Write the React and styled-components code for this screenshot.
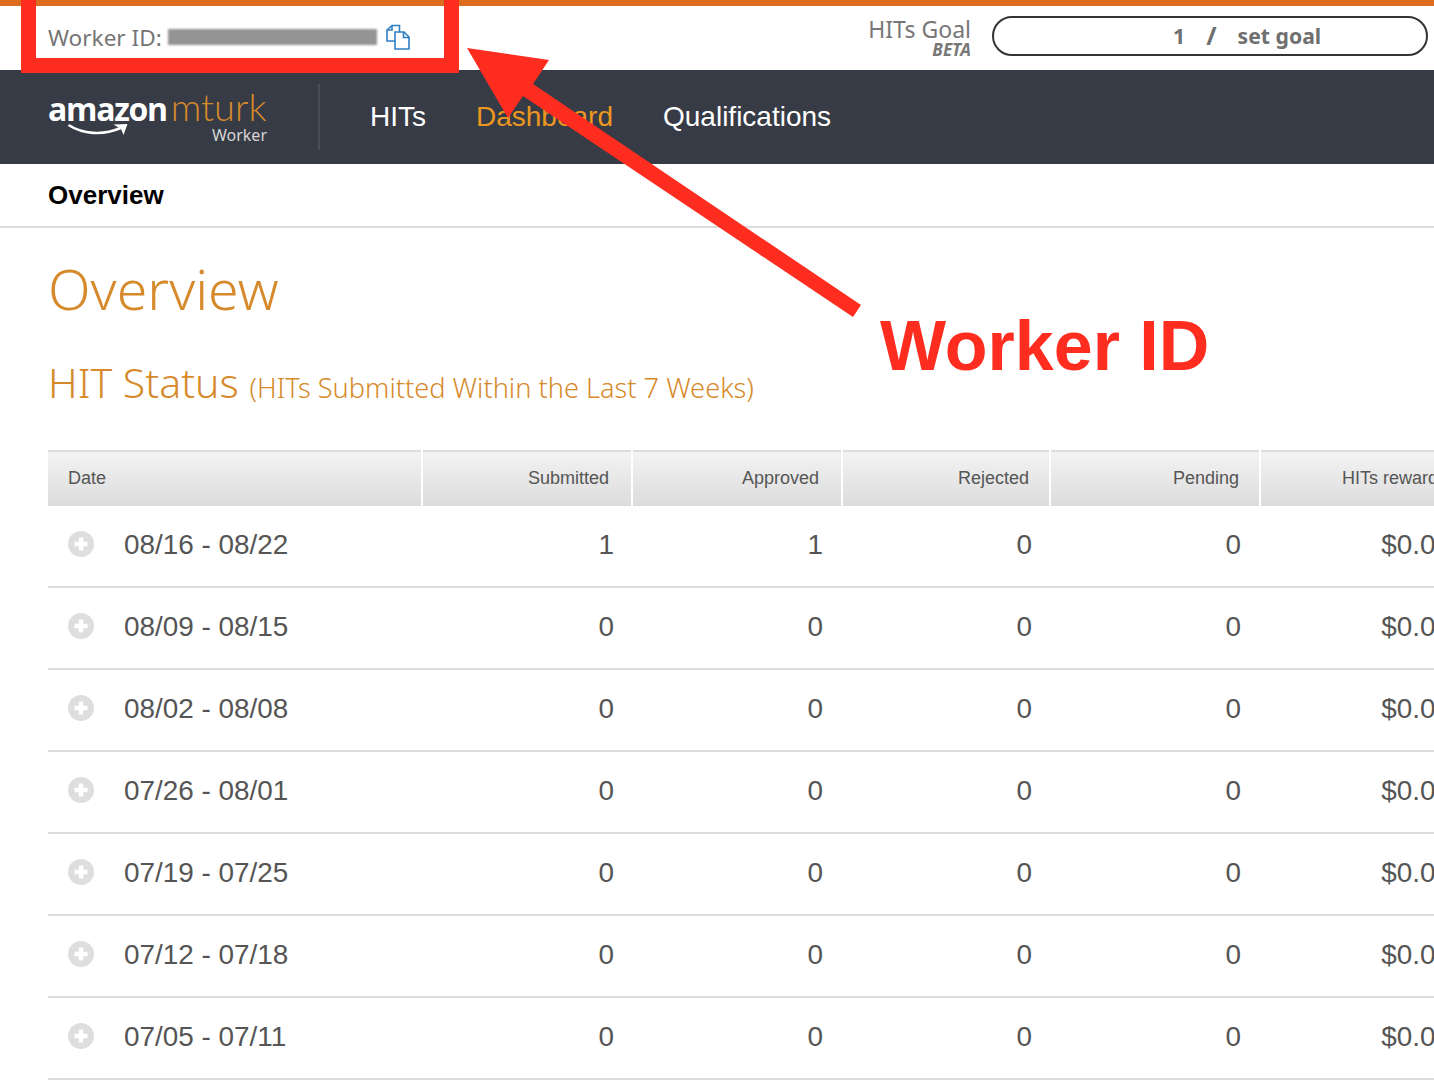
import styled, { createGlobalStyle } from "styled-components";

const rows = [
  { date: "08/16 - 08/22", submitted: 1, approved: 1 },
  { date: "08/09 - 08/15", submitted: 0, approved: 0 },
  { date: "08/02 - 08/08", submitted: 0, approved: 0 },
  { date: "07/26 - 08/01", submitted: 0, approved: 0 },
  { date: "07/19 - 07/25", submitted: 0, approved: 0 },
  { date: "07/12 - 07/18", submitted: 0, approved: 0 },
  { date: "07/05 - 07/11", submitted: 0, approved: 0 },
];

const columns = ["Submitted", "Approved", "Rejected", "Pending", "HITs rewards"];

export default function App() {
  return (
    <Page>
      <GlobalStyle />
      <TopBar>
        <WorkerId>
          Worker ID:
          <Redacted />
          <CopyIcon viewBox="0 0 26 26" fill="none" stroke="#2f7fc4" strokeWidth="1.6">
            <path d="M15 17H2V6l5-4.5h7.5V8" />
            <path d="M7 1.500V6H2" />
            <path d="M10 8h9l5 5v12H10z" fill="#fff" />
            <path d="M18.500 8v5.500H24" />
          </CopyIcon>
        </WorkerId>
        <Goal>
          <GoalLabel>
            HITs Goal
            <small>BETA</small>
          </GoalLabel>
          <GoalPill>
            <span>1</span>
            <em>/</em>
            <span>set goal</span>
          </GoalPill>
        </Goal>
      </TopBar>

      <Nav>
        <Logo>
          <LogoWords>
            <b>amazon</b>
            <i>mturk</i>
          </LogoWords>
          <Smile viewBox="0 0 66 16" fill="none">
            <path d="M2 2c14 9 34 11 52 3" stroke="#fff" strokeWidth="2.600" />
            <path d="M47 1.500l14-.5-4 11-2.500-6z" fill="#fff" />
          </Smile>
          <LogoSub>Worker</LogoSub>
        </Logo>
        <NavLinks>
          <NavLink>HITs</NavLink>
          <NavLink $active>Dashboard</NavLink>
          <NavLink>Qualifications</NavLink>
        </NavLinks>
      </Nav>

      <Breadcrumb>Overview</Breadcrumb>

      <Content>
        <Title>Overview</Title>
        <Subtitle>
          HIT Status <small>(HITs Submitted Within the Last 7 Weeks)</small>
        </Subtitle>
        <Table>
          <HeadRow>
            <HeadCell $left>Date</HeadCell>
            {columns.map((c) => (
              <HeadCell key={c}>{c}</HeadCell>
            ))}
          </HeadRow>
          {rows.map((r) => (
            <Row key={r.date}>
              <DateCell>
                <PlusIcon viewBox="0 0 26 26">
                  <circle cx="13" cy="13" r="13" fill="#dedede" />
                  <path d="M13 6.500v13M6.500 13h13" stroke="#fff" strokeWidth="4.500" />
                </PlusIcon>
                {r.date}
              </DateCell>
              <Cell>{r.submitted}</Cell>
              <Cell>{r.approved}</Cell>
              <Cell>0</Cell>
              <Cell>0</Cell>
              <Cell>$0.00</Cell>
            </Row>
          ))}
        </Table>
      </Content>

      <Highlight />
      <Arrow viewBox="0 0 1434 340">
        <polygon points="467,48 549,60 533,84 861,305 853,317 523,96 508,118" fill="#ff2d20" />
      </Arrow>
      <Callout>Worker ID</Callout>
    </Page>
  );
}

const GlobalStyle = createGlobalStyle`
  html, body {
    margin: 0;
    background: #fff;
    overflow-x: hidden;
  }
`;

const Page = styled.div`
  position: relative;
  width: 1434px;
  height: 1088px;
  overflow: hidden;
  font-family: "Liberation Sans", Arial, sans-serif;
  color: #555;
`;

const TopBar = styled.header`
  height: 70px;
  box-sizing: border-box;
  border-top: 6px solid #dc6d1e;
  display: flex;
  align-items: center;
  justify-content: space-between;
  padding: 0 6px 4px 48px;
`;

const WorkerId = styled.div`
  display: flex;
  align-items: center;
  font-family: "Noto Sans", sans-serif;
  font-size: 22.600px;
  color: #757575;
  margin-top: 2px;
`;

const Redacted = styled.span`
  width: 209px;
  height: 16px;
  margin: 0 8px 0 6px;
  background: #949494;
  filter: blur(0.8px);
`;

const CopyIcon = styled.svg`
  width: 26px;
  height: 26px;
`;

const Goal = styled.div`
  display: flex;
  align-items: center;
  gap: 21px;
`;

const GoalLabel = styled.div`
  display: flex;
  flex-direction: column;
  align-items: flex-end;
  font-family: "Noto Sans", sans-serif;
  font-size: 23px;
  line-height: 26px;
  color: #777;
  margin-top: 1px;
  small {
    font-size: 17px;
    line-height: 16px;
    font-weight: 700;
    font-style: italic;
  }
`;

const GoalPill = styled.div`
  width: 436px;
  height: 40px;
  box-sizing: border-box;
  border: 2px solid #333;
  border-radius: 20px;
  display: flex;
  align-items: center;
  gap: 21px;
  padding: 0 0 2px 179px;
  font-family: "Noto Sans", sans-serif;
  font-size: 21.200px;
  font-weight: 700;
  color: #6f6f6f;
  em {
    font-style: normal;
    font-size: 25px;
  }
`;

const Nav = styled.nav`
  height: 94px;
  background: #373b45;
  display: flex;
  align-items: center;
  padding-left: 48px;
`;

const Logo = styled.div`
  position: relative;
  width: 272px;
  height: 66px;
  box-sizing: border-box;
  border-right: 2px solid #4a4e58;
  margin-top: -1px;
`;

const LogoWords = styled.div`
  display: flex;
  align-items: baseline;
  gap: 4px;
  height: 44px;
  line-height: 44px;
  b {
    font-family: "Open Sans", sans-serif;
    font-size: 32px;
    font-weight: 700;
    letter-spacing: -1.3px;
    color: #fff;
  }
  i {
    font-family: Lato, sans-serif;
    font-style: normal;
    font-size: 38px;
    font-weight: 300;
    color: #d68a2b;
  }
`;

const Smile = styled.svg`
  position: absolute;
  left: 17px;
  top: 39px;
  width: 69px;
  height: 16px;
`;

const LogoSub = styled.div`
  position: absolute;
  right: 51px;
  top: 40px;
  font-family: "Noto Sans", sans-serif;
  font-size: 16px;
  color: #d5d5d5;
`;

const NavLinks = styled.div`
  display: flex;
  gap: 50px;
  margin-left: 50px;
`;

const NavLink = styled.a`
  font-size: 28px;
  color: ${(p) => (p.$active ? "#ec971f" : "#fff")};
`;

const Breadcrumb = styled.div`
  height: 64px;
  box-sizing: border-box;
  border-bottom: 2px solid #ddd;
  padding: 0 48px;
  display: flex;
  align-items: center;
  font-size: 26px;
  font-weight: 700;
  color: #000;
`;

const Content = styled.main`
  padding: 26px 0 0 48px;
`;

const Title = styled.h1`
  margin: 0;
  font-family: "Noto Sans", sans-serif;
  font-size: 55.500px;
  line-height: 70px;
  font-weight: 300;
  color: #d68a2b;
`;

const Subtitle = styled.h2`
  margin: 33px 0 0;
  font-family: "Noto Sans", sans-serif;
  font-size: 41px;
  line-height: 50px;
  font-weight: 300;
  color: #d68a2b;
  small {
    font-size: 27.200px;
  }
`;

const Table = styled.div`
  margin-top: 37px;
  width: 1421px;
`;

const HeadRow = styled.div`
  display: grid;
  grid-template-columns: 373px 208px 208px 206px 208px 208px;
  gap: 2px;
  height: 56px;
`;

const HeadCell = styled.div`
  border-top: 2px solid #ddd;
  background: linear-gradient(#f3f3f3, #dcdcdc);
  font-size: 18px;
  white-space: nowrap;
  display: flex;
  align-items: center;
  justify-content: ${(p) => (p.$left ? "flex-start" : "flex-end")};
  padding: 0 22px 2px 20px;
  color: #555;
  &:nth-child(4), &:nth-child(5) {
    padding-right: 20px;
  }
`;

const Row = styled.div`
  display: grid;
  grid-template-columns: 373px 208px 208px 206px 208px 208px;
  gap: 2px;
  height: 82px;
  box-sizing: border-box;
  border-bottom: 2px solid #ddd;
  padding-bottom: 2px;
  font-size: 27.900px;
  color: #555;
`;

const Cell = styled.div`
  display: flex;
  align-items: center;
  justify-content: flex-end;
  padding-right: 17px;
  white-space: nowrap;
  &:nth-child(3), &:nth-child(5), &:nth-child(6) {
    padding-right: 18px;
  }
`;

const DateCell = styled.div`
  display: flex;
  align-items: center;
  gap: 30px;
  padding-left: 20px;
`;

const PlusIcon = styled.svg`
  width: 26px;
  height: 26px;
  margin-top: -2px;
`;

const Highlight = styled.div`
  position: absolute;
  left: 21px;
  top: -20px;
  width: 438px;
  height: 93px;
  box-sizing: border-box;
  border: 15px solid #ff2d20;
`;

const Arrow = styled.svg`
  position: absolute;
  left: 0;
  top: 0;
  width: 1434px;
  height: 340px;
`;

const Callout = styled.div`
  position: absolute;
  left: 880px;
  top: 306px;
  font-size: 70px;
  line-height: 80px;
  font-weight: 700;
  color: #ff2d20;
`;
